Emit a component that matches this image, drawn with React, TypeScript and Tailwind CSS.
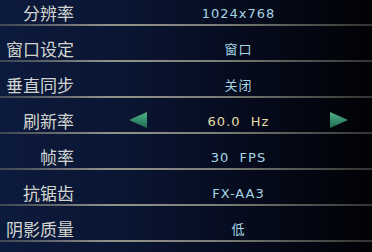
import React from 'react';

type Row = { label: string; value: string; arrows?: boolean };

const rows: Row[] = [
  { label: '分辨率', value: '1024x768' },
  { label: '窗口设定', value: '窗口' },
  { label: '垂直同步', value: '关闭' },
  { label: '刷新率', value: '60.0\u00a0\u00a0Hz', arrows: true },
  { label: '帧率', value: '30\u00a0\u00a0FPS' },
  { label: '抗锯齿', value: 'FX-AA3' },
  { label: '阴影质量', value: '低' },
];

function Arrow({ dir }: { dir: 'left' | 'right' }) {
  return (
    <svg width="20" height="18" viewBox="0 0 20 18" className="block">
      <defs>
        <linearGradient id={`g-${dir}`} x1="0" y1="0" x2="0" y2="1">
          <stop offset="0" stopColor="#4fb08a" />
          <stop offset="1" stopColor="#1f6e52" />
        </linearGradient>
      </defs>
      {dir === 'left' ? (
        <polygon points="1,9 19,1 19,17" fill={`url(#g-${dir})`} />
      ) : (
        <polygon points="1,1 19,9 1,17" fill={`url(#g-${dir})`} />
      )}
    </svg>
  );
}

export default function App() {
  return (
    <div className="w-[372px] h-[252px] overflow-hidden bg-[linear-gradient(90deg,#0c1a3c_0%,#0a1532_35%,#050a1a_70%,#010205_100%)] font-['Noto_Sans_CJK_SC',sans-serif]">
      {rows.map((r, i) => (
        <div
          key={r.label}
          className={`flex flex-col justify-end ${i === 0 ? 'h-[26px]' : 'h-[36px]'}`}
        >
          <div className="grid grid-cols-[74px_54px_20px_181px_20px_1fr] items-end pb-[1px]">
            <div className="text-right text-[17px] leading-[20px] text-[#d2d4d0]">
              {r.label}
            </div>
            <div />
            <div className="pb-[2px]">{r.arrows && <Arrow dir="left" />}</div>
            <div
              className={`text-center pb-[1px] whitespace-nowrap text-[13px] leading-[16px] tracking-[1px] font-['DejaVu_Sans','Noto_Sans_CJK_SC',sans-serif] ${
                r.arrows ? 'text-[#e8dca8]' : 'text-[#a6d6e6]'
              }`}
            >
              {r.value}
            </div>
            <div className="pb-[2px]">{r.arrows && <Arrow dir="right" />}</div>
            <div />
          </div>
          <div className="h-[2px] bg-[linear-gradient(90deg,rgba(120,120,110,0.45)_0%,rgba(170,170,155,0.85)_30%,rgba(160,160,145,0.75)_60%,rgba(110,110,100,0.45)_100%)]" />
        </div>
      ))}
    </div>
  );
}
